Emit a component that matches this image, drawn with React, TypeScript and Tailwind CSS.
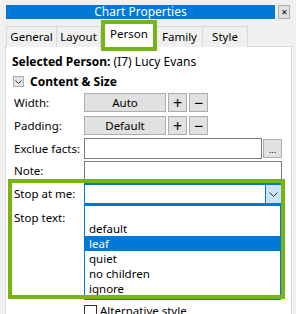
import React from "react";

const G = "#78b414";

function SmallBtn({ children }: { children: React.ReactNode }) {
  return (
    <div className="w-[19px] h-[19px] bg-[#e1e1e1] border border-[#adadad] flex items-center justify-center text-[16px] leading-none text-black">
      {children}
    </div>
  );
}

export default function App() {
  return (
    <div
      className="relative w-[296px] h-[314px] bg-[#f0f0f0] overflow-hidden text-[11.5px] text-black"
      style={{ fontFamily: '"Noto Sans", "Liberation Sans", sans-serif' }}
    >
      {/* title bar */}
      <div className="flex pt-[5px] pl-[6px]">
        <div className="w-[269px] h-[14px] bg-[#0078d7] text-white text-[12px] leading-[14px] text-center">
          Chart Properties
        </div>
        <div className="ml-[3px] w-[12px] h-[14px] bg-[#e1e1e1] border border-[#adadad] flex items-center justify-center text-[8px] leading-none">
          ✕
        </div>
      </div>

      {/* tabs */}
      <div className="flex items-end ml-[6px] mt-[2px] h-[26px] relative z-10">
        <div className="w-[51px] h-[21px] border border-[#d9d9d9] border-b-0 bg-[#f0f0f0] flex items-center justify-center">General</div>
        <div className="w-[44px] h-[21px] border border-[#d9d9d9] border-b-0 border-l-0 bg-[#f0f0f0] flex items-center justify-center">Layout</div>
        <div className="w-[56px] h-[26px] border border-[#d9d9d9] border-b-0 bg-white flex items-center justify-center pb-[2px]">Person</div>
        <div className="w-[46px] h-[21px] border border-[#d9d9d9] border-b-0 border-l-0 bg-[#f0f0f0] flex items-center justify-center">Family</div>
        <div className="w-[45px] h-[21px] border border-[#d9d9d9] border-b-0 border-l-0 bg-[#f0f0f0] flex items-center justify-center">Style</div>
      </div>

      {/* panel */}
      <div className="ml-[5px] -mt-[1px] w-[287px] h-[280px] border border-[#d9d9d9] bg-white">
        <div className="mt-[7px] pl-[6px] h-[16px] leading-[16px] text-[12px]">
          <span className="font-bold">Selected Person:</span> (I7) Lucy Evans
        </div>
        <div className="mt-[5px] pl-[7px] h-[13px] flex items-center gap-[6px]">
          <div className="w-[11px] h-[11px] bg-[#e5e5e5] border border-[#adadad] flex items-center justify-center">
            <svg width="7" height="4" viewBox="0 0 7 4">
              <path d="M0.5 0.5 L3.5 3.5 L6.5 0.5" stroke="#333" fill="none" strokeWidth="1" />
            </svg>
          </div>
          <span className="font-bold leading-[13px] text-[12px]">Content &amp; Size</span>
        </div>

        <div className="mt-[5px] pl-[8px] flex items-center h-[19px]">
          <div className="w-[70px]">Width:</div>
          <div className="w-[82px] h-[19px] bg-[#e1e1e1] border border-[#adadad] flex items-center justify-center">Auto</div>
          <div className="ml-[2px] flex gap-[2px]">
            <SmallBtn>+</SmallBtn>
            <SmallBtn>−</SmallBtn>
          </div>
        </div>
        <div className="mt-[4px] pl-[8px] flex items-center h-[19px]">
          <div className="w-[70px]">Padding:</div>
          <div className="w-[82px] h-[19px] bg-[#e1e1e1] border border-[#adadad] flex items-center justify-center">Default</div>
          <div className="ml-[2px] flex gap-[2px]">
            <SmallBtn>+</SmallBtn>
            <SmallBtn>−</SmallBtn>
          </div>
        </div>
        <div className="mt-[3px] pl-[8px] flex items-center h-[21px]">
          <div className="w-[70px]">Exclue facts:</div>
          <div className="w-[178px] h-[21px] bg-white border border-[#7a7a7a]" />
          <div className="ml-[1px] w-[19px] h-[19px] bg-[#e1e1e1] border border-[#adadad] flex items-end justify-center pb-[3px] text-[9px] leading-none">...</div>
        </div>
        <div className="mt-[2px] pl-[8px] flex items-start h-[20px]">
          <div className="w-[70px] leading-[20px]">Note:</div>
          <div className="w-[198px] h-[22px] bg-white border border-[#7a7a7a]" />
        </div>
        <div className="mt-[2px] pl-[8px] flex items-center h-[22px]">
          <div className="w-[70px]">Stop at me:</div>
          <div className="w-[198px] h-[22px] bg-white border-x border-y-2 border-[#0078d7] flex justify-end">
            <div className="w-[16px] h-full bg-[#cce4f7] border-l border-[#0078d7] flex items-center justify-center">
              <svg width="9" height="5" viewBox="0 0 9 5">
                <path d="M0.5 0.5 L4.5 4.5 L8.5 0.5" stroke="#333" fill="none" strokeWidth="1" />
              </svg>
            </div>
          </div>
        </div>
        <div className="mt-[5px] pl-[8px] h-[16px] leading-[16px]">Stop text:</div>
        <div className="mt-[78px] pl-[78px] flex items-center h-[14px] gap-[3px]">
          <div className="w-[13px] h-[13px] border border-[#333] bg-white" />
          <span className="leading-[14px]">Alternative style</span>
        </div>
      </div>

      {/* dropdown list */}
      <div className="absolute left-[84px] top-[205px] w-[197px] h-[95px] bg-white border border-[#0078d7] z-20">
        {["", "default", "leaf", "quiet", "no children", "ignore"].map((t) => (
          <div
            key={t || "blank"}
            className={
              "h-[15px] leading-[15px] pl-[4px] " + (t === "leaf" ? "bg-[#0078d7] text-white" : "")
            }
          >
            {t}
          </div>
        ))}
      </div>

      {/* green highlights */}
      <div className="absolute left-[101px] top-[20px] w-[56px] h-[31px] border-[4px] z-30" style={{ borderColor: G }} />
      <div className="absolute left-[8px] top-[179px] w-[277px] h-[120px] border-[4px] z-30" style={{ borderColor: G }} />
    </div>
  );
}
